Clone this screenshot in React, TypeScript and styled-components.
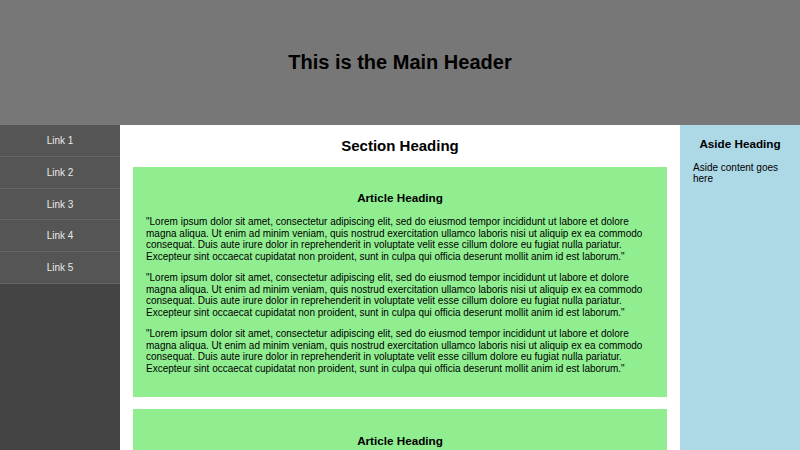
import React from "react";
import styled, { createGlobalStyle } from "styled-components";

const GlobalStyle = createGlobalStyle`
  html, body {
    margin: 0;
    padding: 0;
  }
  body {
    font-family: "Liberation Sans", Arial, sans-serif;
    font-size: 10px;
    line-height: 1.15;
    color: #000;
    background: #fff;
  }
`;

const Page = styled.div`
  display: flex;
  flex-direction: column;
  min-height: 100vh;
`;

const Header = styled.header`
  height: 125px;
  background: #777;
  display: flex;
  align-items: center;
  justify-content: center;
`;

const MainTitle = styled.h1`
  margin: 0;
  font-size: 20px;
  line-height: 23px;
  font-weight: bold;
`;

const Body = styled.div`
  flex: 1;
  display: flex;
  align-items: stretch;
`;

const Nav = styled.nav`
  width: 120px;
  flex-shrink: 0;
  background: #444;
`;

const NavItem = styled.a`
  display: block;
  padding: 10px 0 9.25px;
  line-height: 11.5px;
  text-align: center;
  color: #e8e8e8;
  background: #555;
  text-decoration: none;
  border-bottom: 1px solid #666;
`;

const Main = styled.main`
  flex: 1;
  min-width: 0;
  padding: 0 13px;
  background: #fff;
  display: flow-root;
`;

const SectionHeading = styled.h2`
  font-size: 15px;
  line-height: 17.25px;
  margin: 12.45px 0;
  text-align: center;
`;

const Article = styled.article`
  background: #90ee90;
  padding: 12.5px 13px 12.5px;
  margin-bottom: 12.5px;
  display: flow-root;
`;

const ArticleHeading = styled.h3`
  font-size: 11.7px;
  line-height: 13.45px;
  margin: 11.7px 0;
  text-align: center;
`;

const Para = styled.p`
  margin: 10px 0;
  line-height: 11.5px;
`;

const AsideText = styled(Para)`
  margin-top: 10.5px;
`;

const Aside = styled.aside`
  width: 120px;
  flex-shrink: 0;
  box-sizing: border-box;
  padding: 0 13px;
  background: #add8e6;
  display: flow-root;
`;

const lorem =
  '"Lorem ipsum dolor sit amet, consectetur adipiscing elit, sed do eiusmod tempor incididunt ut labore et dolore magna aliqua. Ut enim ad minim veniam, quis nostrud exercitation ullamco laboris nisi ut aliquip ex ea commodo consequat. Duis aute irure dolor in reprehenderit in voluptate velit esse cillum dolore eu fugiat nulla pariatur. Excepteur sint occaecat cupidatat non proident, sunt in culpa qui officia deserunt mollit anim id est laborum."';

const links = ["Link 1", "Link 2", "Link 3", "Link 4", "Link 5"];

function ArticleBlock() {
  return (
    <Article>
      <ArticleHeading>Article Heading</ArticleHeading>
      <Para>{lorem}</Para>
      <Para>{lorem}</Para>
      <Para>{lorem}</Para>
    </Article>
  );
}

export default function App() {
  return (
    <Page>
      <GlobalStyle />
      <Header>
        <MainTitle>This is the Main Header</MainTitle>
      </Header>
      <Body>
        <Nav>
          {links.map((l) => (
            <NavItem key={l} href="#">
              {l}
            </NavItem>
          ))}
        </Nav>
        <Main>
          <SectionHeading>Section Heading</SectionHeading>
          <ArticleBlock />
          <ArticleBlock />
        </Main>
        <Aside>
          <ArticleHeading>Aside Heading</ArticleHeading>
          <AsideText>Aside content goes here</AsideText>
        </Aside>
      </Body>
    </Page>
  );
}
